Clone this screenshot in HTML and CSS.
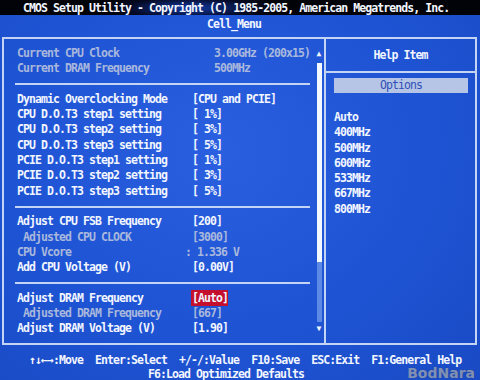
FILE: index.html
```html
<!DOCTYPE html>
<html lang="en">
<head>
    <meta charset="UTF-8">
    <title>CMOS Setup Utility</title>
    <link rel="stylesheet" href="styles.css">
</head>
<body>
<div class="screen">
    <div class="topbar">CMOS Setup Utility - Copyright (C) 1985-2005, American Megatrends, Inc.</div>
    <div class="menu-title">Cell_Menu</div>

    <!-- Основная рамка -->
    <div class="frame">
        <div class="main">
            <div class="items">
                <div class="row dim"><span>Current CPU Clock</span><span class="cur">3.00GHz (200x15)</span></div>
                <div class="row dim"><span>Current DRAM Frequency</span><span class="cur">500MHz</span></div>
                <div class="sep"></div>
                <div class="row"><span>Dynamic Overclocking Mode</span><span>[CPU and PCIE]</span></div>
                <div class="row"><span>CPU D.O.T3 step1 setting</span><span>[ 1%]</span></div>
                <div class="row"><span>CPU D.O.T3 step2 setting</span><span>[ 3%]</span></div>
                <div class="row"><span>CPU D.O.T3 step3 setting</span><span>[ 5%]</span></div>
                <div class="row"><span>PCIE D.O.T3 step1 setting</span><span>[ 1%]</span></div>
                <div class="row"><span>PCIE D.O.T3 step2 setting</span><span>[ 3%]</span></div>
                <div class="row"><span>PCIE D.O.T3 step3 setting</span><span>[ 5%]</span></div>
                <div class="sep"></div>
                <div class="row"><span>Adjust CPU FSB Frequency</span><span>[200]</span></div>
                <div class="row dim indent"><span>Adjusted CPU CLOCK</span><span>[3000]</span></div>
                <div class="row dim"><span>CPU Vcore</span><span class="vcore">: 1.336 V</span></div>
                <div class="row"><span>Add CPU Voltage (V)</span><span>[0.00V]</span></div>
                <div class="sep"></div>
                <div class="row"><span>Adjust DRAM Frequency</span><span><span class="selected">[Auto]</span></span></div>
                <div class="row dim indent"><span>Adjusted DRAM Frequency</span><span>[667]</span></div>
                <div class="row"><span>Adjust DRAM Voltage (V)</span><span>[1.90]</span></div>
            </div>
            <div class="scroll">
                <span class="arrow">&#9650;</span>
                <div class="track">
                    <div class="thumb"></div>
                    <div class="rest"></div>
                </div>
                <span class="arrow">&#9660;</span>
            </div>
        </div>

        <!-- Справка -->
        <div class="help">
            <div class="help-title">Help Item</div>
            <div class="options">Options</div>
            <div class="option-list">
                <div>Auto</div>
                <div>400MHz</div>
                <div>500MHz</div>
                <div>600MHz</div>
                <div>533MHz</div>
                <div>667MHz</div>
                <div>800MHz</div>
            </div>
        </div>
    </div>

    <div class="footer">
        <div class="keys">&#8593;&#8595;&#8592;&#8594;:Move  Enter:Select  +/-/:Value  F10:Save  ESC:Exit  F1:General Help</div>
        <div class="keys second">F6:Load Optimized Defaults</div>
    </div>

    <div class="watermark">BodNara</div>
</div>
</body>
</html>
```

FILE: styles.css
```css
body {
    margin: 0;
    background-color: #1f55d4;
}

.screen {
    position: relative;
    width: 480px;
    height: 380px;
    overflow: hidden;
    font-family: "DejaVu Sans Mono", "Liberation Mono", monospace;
    font-size: 11.5px;
    font-weight: bold;
    letter-spacing: -0.92px;
    color: #f2f6ff;
    background: radial-gradient(ellipse at 45% 40%, #2a60e0 0%, #1e54d4 55%, #1a4ac4 100%);
}

/* Верхняя строка */
.topbar {
    height: 15px;
    line-height: 16px;
    padding-left: 23px;
    white-space: pre;
    background: radial-gradient(ellipse 90px 14px at 190px 8px, #123aa8 0%, #050a24 70%, #020308 100%);
}

.menu-title {
    height: 22px;
    line-height: 15px;
    padding-top: 2px;
    padding-left: 207px;
    box-sizing: border-box;
}

/* Рамка */
.frame {
    display: flex;
    width: 475px;
    height: 308px;
    margin-left: 2px;
    border: 2px solid #c4d4f4;
    box-sizing: border-box;
}

.main {
    display: flex;
    width: 322px;
    border-right: 2px solid #c4d4f4;
    box-sizing: border-box;
}

.items {
    flex: 1;
    padding: 7px 5px 0 13px;
}

.row {
    display: grid;
    grid-template-columns: 175px 1fr;
    height: 15.3px;
    line-height: 15.3px;
    white-space: pre;
}

.row.dim {
    color: #a9b8dc;
}

.row.indent span:first-child {
    padding-left: 6px;
}

.row .cur {
    padding-left: 22px;
}

.row .vcore {
    margin-left: -7px;
}

.selected {
    background-color: #c4102c;
    padding: 1px 0;
    margin-left: -1px;
    padding-left: 1px;
}

.sep {
    height: 15.3px;
    display: flex;
    align-items: center;
    margin-left: -2px;
}

.sep::before {
    content: "";
    flex: 1;
    height: 2px;
    background-color: #c4d4f4;
}

/* Полоса прокрутки */
.scroll {
    width: 8px;
    margin-right: 1px;
    display: flex;
    flex-direction: column;
    align-items: center;
    padding-top: 11px;
}

.arrow {
    font-size: 8px;
    line-height: 8px;
    height: 8px;
    letter-spacing: 0;
}

.track {
    width: 5px;
    margin: 5px 0 3px;
    display: flex;
    flex-direction: column;
}

.thumb {
    height: 199px;
    background-color: #f4f8ff;
}

.rest {
    height: 60px;
    background-color: #5c8ae4;
}

/* Справка */
.help {
    flex: 1;
}

.help-title {
    height: 32px;
    line-height: 32px;
    text-align: center;
    border-bottom: 2px solid #c4d4f4;
}

.options {
    height: 15px;
    line-height: 15px;
    margin: 5px 7px 0 8px;
    text-align: center;
    background-color: #b6c5e6;
    color: #2f50b6;
    font-weight: normal;
}

.option-list {
    padding: 17px 0 0 8px;
    line-height: 15.3px;
}

/* Нижняя подсказка */
.footer {
    padding-top: 8px;
}

.keys {
    line-height: 14px;
    padding-left: 29px;
    white-space: pre;
}

.keys.second {
    padding-left: 148px;
}

.watermark {
    position: absolute;
    right: 5px;
    bottom: 0;
    font-family: "DejaVu Sans", sans-serif;
    font-size: 14px;
    line-height: 14px;
    font-weight: bold;
    letter-spacing: 0;
    color: rgba(165, 180, 212, 0.7);
    text-shadow: 0 0 1px #33436e;
}
```
